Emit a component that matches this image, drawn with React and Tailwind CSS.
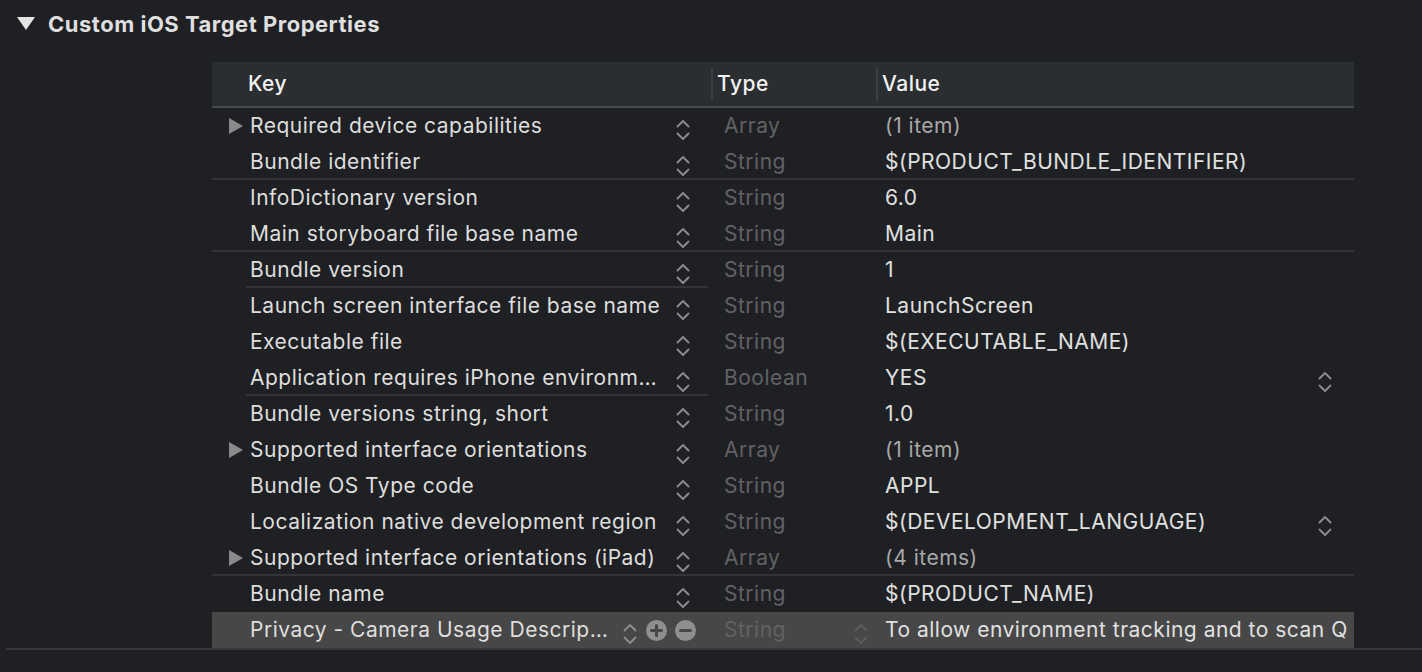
import React from 'react';

const rows = [
  { key: 'Required device capabilities', type: 'Array', value: '(1 item)', disclosure: true, dim: true },
  { key: 'Bundle identifier', type: 'String', value: '$(PRODUCT_BUNDLE_IDENTIFIER)', sep: 'full' },
  { key: 'InfoDictionary version', type: 'String', value: '6.0' },
  { key: 'Main storyboard file base name', type: 'String', value: 'Main', sep: 'full' },
  { key: 'Bundle version', type: 'String', value: '1', sep: 'key' },
  { key: 'Launch screen interface file base name', type: 'String', value: 'LaunchScreen' },
  { key: 'Executable file', type: 'String', value: '$(EXECUTABLE_NAME)' },
  { key: 'Application requires iPhone environm…', type: 'Boolean', value: 'YES', valueStepper: true, sep: 'key' },
  { key: 'Bundle versions string, short', type: 'String', value: '1.0' },
  { key: 'Supported interface orientations', type: 'Array', value: '(1 item)', disclosure: true, dim: true },
  { key: 'Bundle OS Type code', type: 'String', value: 'APPL' },
  { key: 'Localization native development region', type: 'String', value: '$(DEVELOPMENT_LANGUAGE)', valueStepper: true },
  { key: 'Supported interface orientations (iPad)', type: 'Array', value: '(4 items)', disclosure: true, dim: true, sep: 'full' },
  { key: 'Bundle name', type: 'String', value: '$(PRODUCT_NAME)' },
  { key: 'Privacy - Camera Usage Descrip…', type: 'String', value: 'To allow environment tracking and to scan Q', selected: true },
];

function Stepper({ color = '#8e8e8e' }) {
  return (
    <svg width="16" height="24" viewBox="0 0 16 24" className="mt-[10px] shrink-0" fill="none" stroke={color} strokeWidth="1.8" strokeLinecap="round" strokeLinejoin="round">
      <path d="M2.5 8.5 L8 3 L13.5 8.5" />
      <path d="M2.5 15.5 L8 21 L13.5 15.5" />
    </svg>
  );
}

function RoundButton({ minus }) {
  return (
    <svg width="21" height="21" viewBox="0 0 21 21" className="mt-[2px] shrink-0">
      <circle cx="10.5" cy="10.5" r="10.5" fill="#8f8f8f" />
      <path d={minus ? 'M5.5 10.5 H15.5' : 'M5.5 10.5 H15.5 M10.5 5.5 V15.5'} stroke="#474747" strokeWidth="3" strokeLinecap="round" />
    </svg>
  );
}

function Row({ row }) {
  const full = row.sep === 'full';
  return (
    <div
      className={`flex h-[36px] border-b-2 ${full ? 'border-[#333437]' : 'border-transparent'} ${row.selected ? 'bg-[#474747]' : ''}`}
    >
      <div className="flex w-[500px] shrink-0">
        <div className="flex w-[34px] shrink-0 items-center pl-[17px] pt-[1px]">
          {row.disclosure && (
            <svg width="14" height="16" viewBox="0 0 14 16">
              <path d="M0 0 L14 8 L0 16 Z" fill="#8a8a8a" />
            </svg>
          )}
        </div>
        <div
          className={`-mb-[2px] flex min-w-0 flex-1 items-center border-b-2 pl-[4px] ${row.sep === 'key' ? 'border-[#333437]' : 'border-transparent'} ${row.selected ? 'pr-[12px]' : 'pr-[17px]'}`}
        >
          <span className="min-w-0 flex-1 overflow-hidden whitespace-nowrap pt-[1px] text-[#dedede]">{row.key}</span>
          {row.selected ? (
            <div className="flex items-center">
              <Stepper />
              <div className="ml-[8px]"><RoundButton /></div>
              <div className="ml-[8px]"><RoundButton minus /></div>
            </div>
          ) : (
            <Stepper />
          )}
        </div>
        <div className="w-[4px] shrink-0" />
      </div>
      <div className="flex w-[164px] shrink-0 items-center pl-[12px] pr-[7px]">
        <span className="flex-1 pt-[1px] text-[#616265]">{row.type}</span>
        {row.selected && <Stepper color="#5c5c5c" />}
      </div>
      <div className={`flex min-w-0 flex-1 items-center overflow-hidden pl-[9px] ${row.selected ? 'pr-0' : 'pr-[21px]'}`}>
        <span className={`flex-1 overflow-hidden whitespace-nowrap pt-[1px] ${row.dim ? 'text-[#a8a8a8]' : 'text-[#e0e0e0]'}`}>{row.value}</span>
        {row.valueStepper && <Stepper />}
      </div>
    </div>
  );
}

export default function App() {
  return (
    <div className="h-[672px] w-[1422px] overflow-hidden bg-[#1f2023] font-['Inter',sans-serif] text-[21px] tracking-[0.5px]">
      <div className="flex h-[62px] items-start pt-[8px]">
        <svg width="18" height="13" viewBox="0 0 18 13" className="ml-[17px] mt-[9px] shrink-0">
          <path d="M0 0 H18 L9 13 Z" fill="#e4e4e4" />
        </svg>
        <h1 className="ml-[13px] text-[22px] font-bold tracking-[0.5px] text-[#dfdfdf]">Custom iOS Target Properties</h1>
      </div>
      <div className="ml-[212px] w-[1142px]">
        <div className="flex h-[46px] items-center border-b-2 border-[#48494c] bg-[#2b2e31] font-medium text-[#f2f2f2]">
          <div className="w-[499px] shrink-0 pl-[36px]">Key</div>
          <div className="h-[33px] w-[2px] bg-[#3d4043]" />
          <div className="w-[163px] shrink-0 pl-[4px]">Type</div>
          <div className="h-[33px] w-[2px] bg-[#3d4043]" />
          <div className="flex-1 pl-[4px]">Value</div>
        </div>
        {rows.map((row) => (
          <Row key={row.key} row={row} />
        ))}
      </div>
      <div className="ml-[6px] h-[2px] bg-[#37383b]" />
    </div>
  );
}
